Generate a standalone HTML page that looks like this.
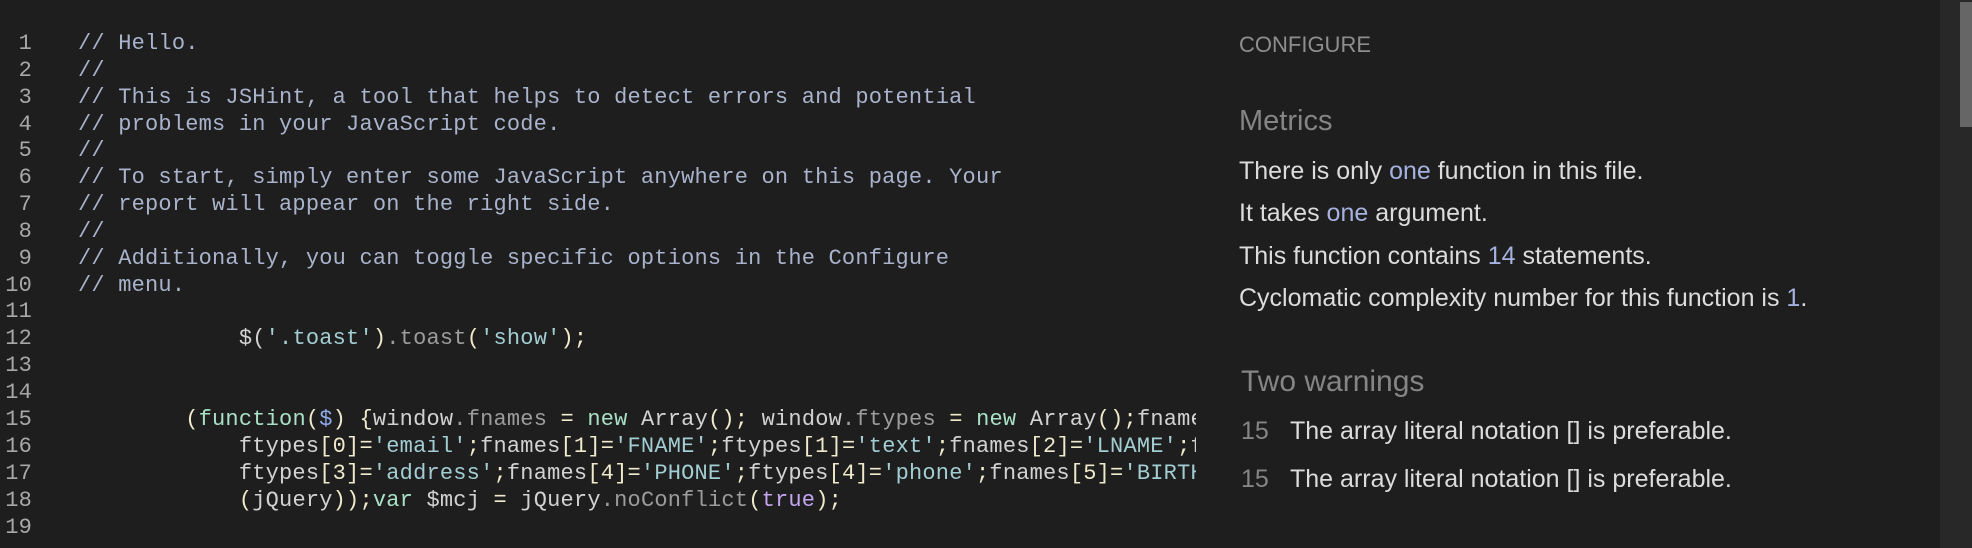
<!DOCTYPE html>
<html><head><meta charset="utf-8"><style>
html,body{margin:0;padding:0;width:1972px;height:548px;overflow:hidden;background:#1e1e1e}
#code{position:absolute;left:0;top:2px;width:1196px;height:546px;overflow:hidden;font-family:"Liberation Mono",monospace;font-size:22px;letter-spacing:0.2px;}
.ln{position:absolute;left:0;width:32px;text-align:right;color:#a8a8a8}
.l{position:absolute;left:78px;white-space:pre;color:#d6d6d6}
.c{color:#a9b3cc}.p{color:#efeacb}.k{color:#a9e1c6}.v{color:#8fa8e8}.w{color:#d2d2d2}.g{color:#9c9c9c}.s{color:#a2cdd2}.t{color:#c3a5f0}
#strip{position:absolute;left:1940px;top:0;width:32px;height:548px;background:#282828}
#thumb{position:absolute;left:1960px;top:2px;width:12px;height:125px;background:#666}
#rp{position:absolute;left:1239px;top:0;font-family:"Liberation Sans",sans-serif;color:#dcdcdc}
.r{position:absolute;white-space:nowrap}
.b{color:#a5b1de}
</style></head><body>
<div id="code">
<div class="ln" style="top:29px">1</div><div class="l c" style="top:29px">// Hello.</div>
<div class="ln" style="top:56px">2</div><div class="l c" style="top:56px">//</div>
<div class="ln" style="top:83px">3</div><div class="l c" style="top:83px">// This is JSHint, a tool that helps to detect errors and potential</div>
<div class="ln" style="top:110px">4</div><div class="l c" style="top:110px">// problems in your JavaScript code.</div>
<div class="ln" style="top:136px">5</div><div class="l c" style="top:136px">//</div>
<div class="ln" style="top:163px">6</div><div class="l c" style="top:163px">// To start, simply enter some JavaScript anywhere on this page. Your</div>
<div class="ln" style="top:190px">7</div><div class="l c" style="top:190px">// report will appear on the right side.</div>
<div class="ln" style="top:217px">8</div><div class="l c" style="top:217px">//</div>
<div class="ln" style="top:244px">9</div><div class="l c" style="top:244px">// Additionally, you can toggle specific options in the Configure</div>
<div class="ln" style="top:271px">10</div><div class="l c" style="top:271px">// menu.</div>
<div class="ln" style="top:297px">11</div>
<div class="ln" style="top:324px">12</div><div class="l" style="top:324px">            <span class="w">$(</span><span class="s">'.toast'</span><span class="p">)</span><span class="g">.toast</span><span class="p">(</span><span class="s">'show'</span><span class="p">);</span></div>
<div class="ln" style="top:351px">13</div>
<div class="ln" style="top:378px">14</div>
<div class="ln" style="top:405px">15</div><div class="l" style="top:405px">        <span class="p">(</span><span class="k">function</span><span class="p">(</span><span class="v">$</span><span class="p">) {</span><span class="w">window</span><span class="g">.fnames</span> <span class="p">=</span> <span class="k">new</span> <span class="w">Array</span><span class="p">();</span> <span class="w">window</span><span class="g">.ftypes</span> <span class="p">=</span> <span class="k">new</span> <span class="w">Array</span><span class="p">();</span><span class="w">fnames</span><span class="p">[0]=</span><span class="s">'EMAIL'</span><span class="p">;</span></div>
<div class="ln" style="top:432px">16</div><div class="l" style="top:432px">            <span class="w">ftypes</span><span class="p">[0]=</span><span class="s">'email'</span><span class="p">;</span><span class="w">fnames</span><span class="p">[1]=</span><span class="s">'FNAME'</span><span class="p">;</span><span class="w">ftypes</span><span class="p">[1]=</span><span class="s">'text'</span><span class="p">;</span><span class="w">fnames</span><span class="p">[2]=</span><span class="s">'LNAME'</span><span class="p">;</span><span class="w">ftypes</span><span class="p">[2]=</span><span class="s">'text'</span></div>
<div class="ln" style="top:459px">17</div><div class="l" style="top:459px">            <span class="w">ftypes</span><span class="p">[3]=</span><span class="s">'address'</span><span class="p">;</span><span class="w">fnames</span><span class="p">[4]=</span><span class="s">'PHONE'</span><span class="p">;</span><span class="w">ftypes</span><span class="p">[4]=</span><span class="s">'phone'</span><span class="p">;</span><span class="w">fnames</span><span class="p">[5]=</span><span class="s">'BIRTHDAY'</span></div>
<div class="ln" style="top:486px">18</div><div class="l" style="top:486px">            <span class="p">(</span><span class="w">jQuery</span><span class="p">));</span><span class="k">var</span> <span class="w">$mcj</span> <span class="p">=</span> <span class="w">jQuery</span><span class="g">.noConflict</span><span class="p">(</span><span class="t">true</span><span class="p">);</span></div>
<div class="ln" style="top:513px">19</div>
</div>
<div id="rp">
<div class="r" style="top:32px;font-size:22px;color:#8e8e8e">CONFIGURE</div>
<div class="r" style="top:105px;font-size:29px;color:#858585">Metrics</div>
<div class="r" style="top:157px;font-size:25px">There is only <span class="b">one</span> function in this file.</div>
<div class="r" style="top:199px;font-size:25px">It takes <span class="b">one</span> argument.</div>
<div class="r" style="top:242px;font-size:25px">This function contains <span class="b">14</span> statements.</div>
<div class="r" style="top:284px;font-size:25px">Cyclomatic complexity number for this function is <span class="b">1</span>.</div>
<div class="r" style="top:365px;left:2px;font-size:30px;color:#858585">Two warnings</div>
<div class="r" style="top:417px;left:2px;font-size:25px;color:#858585">15</div><div class="r" style="top:417px;left:51px;font-size:25px">The array literal notation [] is preferable.</div>
<div class="r" style="top:465px;left:2px;font-size:25px;color:#858585">15</div><div class="r" style="top:465px;left:51px;font-size:25px">The array literal notation [] is preferable.</div>
</div>
<div id="strip"></div><div id="thumb"></div>
</body></html>
